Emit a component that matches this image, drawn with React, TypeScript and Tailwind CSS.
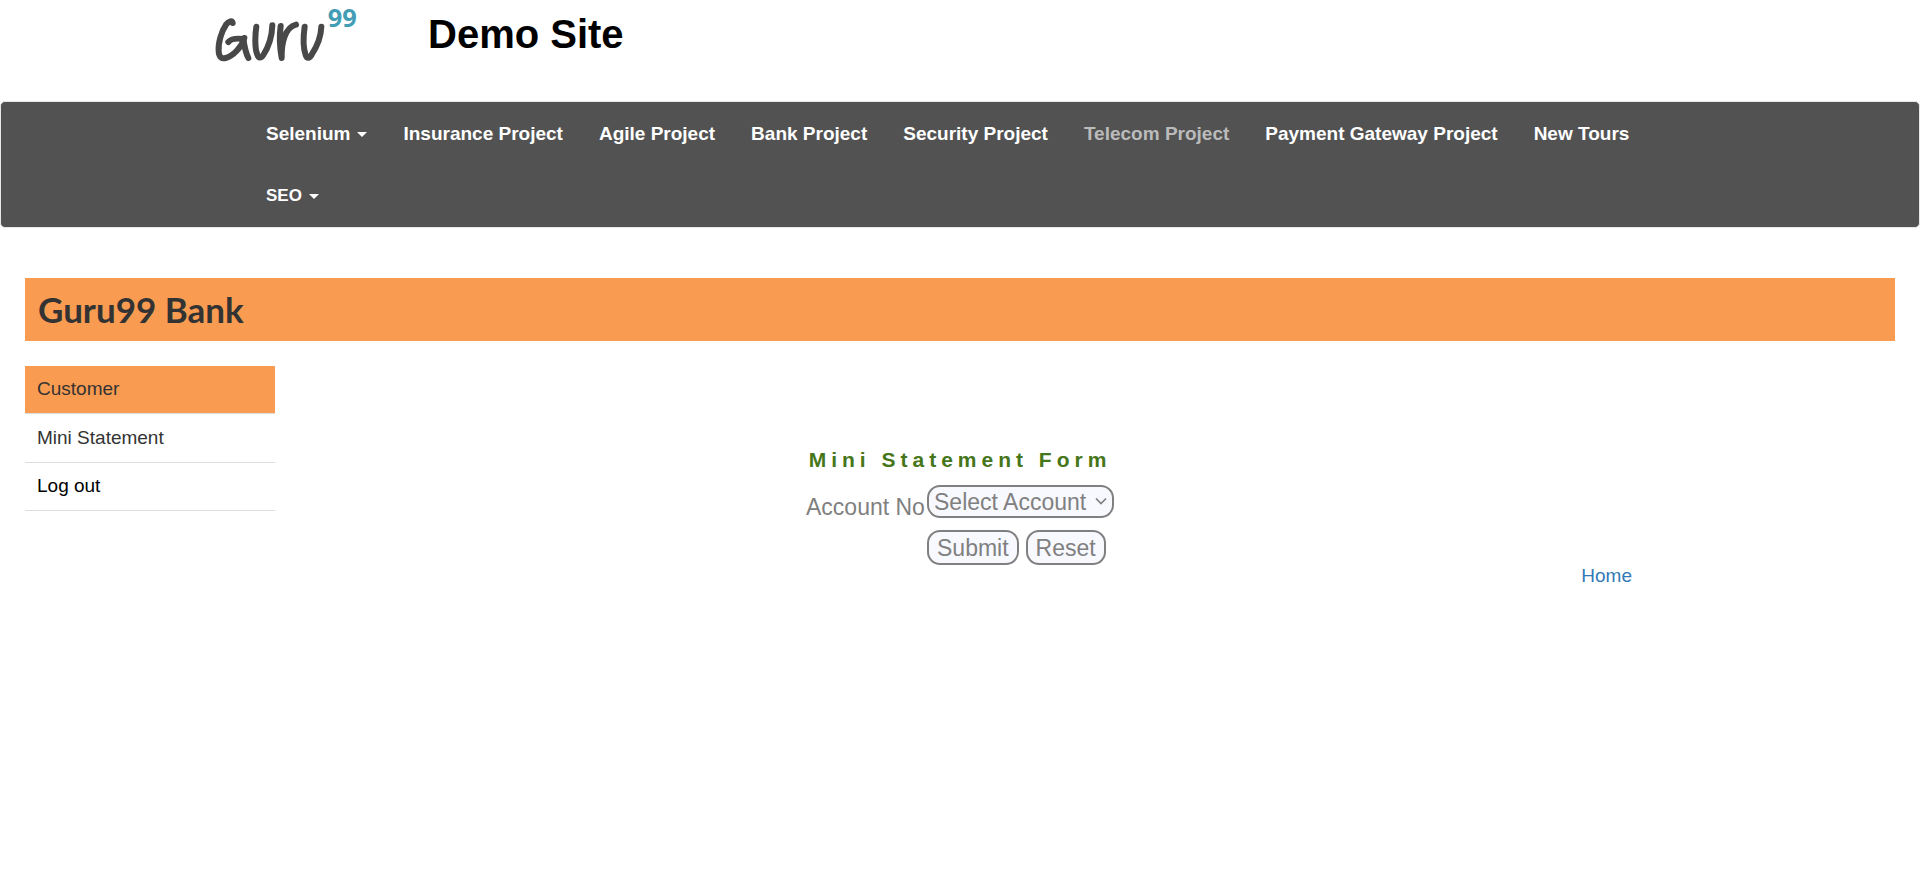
import React from "react";

type NavEntry = { label: string; menu?: boolean; visited?: boolean; small?: boolean };

const NAV: NavEntry[] = [
  { label: "Selenium", menu: true },
  { label: "Insurance Project" },
  { label: "Agile Project" },
  { label: "Bank Project" },
  { label: "Security Project" },
  { label: "Telecom Project", visited: true },
  { label: "Payment Gateway Project" },
  { label: "New Tours" },
  { label: "SEO", menu: true, small: true },
];

function Logo() {
  return (
    <svg
      viewBox="0 0 510 210"
      className="h-[70px] w-[170px]"
      role="img"
      aria-label="Guru99"
      fill="none"
      stroke="#484848"
      strokeWidth="18"
      strokeLinecap="round"
      strokeLinejoin="round"
    >
      <path d="M98 69C96 61 87 62 78 74C64 94 54 130 56 154C57 171 65 177 77 174C100 168 126 140 133 114" />
      <path d="M85 126C92 118 108 114 130 117C133 138 137 158 145 174" />
      <path d="M169 80C165 106 164 146 172 164C176 175 183 176 190 165C206 140 216 106 217 76" />
      <path d="M242 78C238 106 240 146 245 174C244 132 254 82 288 74" />
      <path d="M314 80C310 108 310 146 317 165C321 177 328 176 335 164C352 138 363 108 364 80" />
      <text
        x="383"
        y="80"
        fontSize="76"
        fontWeight="700"
        fill="#429db5"
        stroke="none"
        className="font-['Noto_Sans','Open_Sans',sans-serif]"
      >
        99
      </text>
    </svg>
  );
}

function Caret() {
  return (
    <span
      aria-hidden="true"
      className="ml-[7px] inline-block border-x-[5px] border-t-[5px] border-x-transparent border-t-current align-middle"
    />
  );
}

function SiteHeader() {
  return (
    <header className="mx-auto flex h-[101px] max-w-[1520px] items-start">
      <a href="#home">
        <Logo />
      </a>
      <h1 className="ml-[58px] pt-3 text-[40px] leading-[44px] font-bold text-black">Demo Site</h1>
    </header>
  );
}

function NavBar() {
  return (
    <nav className="rounded-[5px] border border-[#e7e7e7] bg-[#525252] pt-px">
      <ul className="mx-auto flex max-w-[1462px] flex-wrap px-[19px]">
        {NAV.map((item) => (
          <li key={item.label}>
            <a
              href="#nav"
              className={`block px-[18px] leading-[62px] font-bold whitespace-nowrap ${
                item.small ? "text-[17px]" : "text-[19px]"
              } ${item.visited ? "text-[#bbbbbb]" : "text-white"}`}
            >
              {item.label}
              {item.menu && <Caret />}
            </a>
          </li>
        ))}
      </ul>
    </nav>
  );
}

function SideMenu() {
  return (
    <ul className="text-[19px] leading-[24px] text-[#333333]">
      <li className="border-b border-[#dddddd] bg-[#f99b51] px-3 pt-[11px] pb-3">Customer</li>
      <li className="border-b border-[#dddddd]">
        <a href="#mini" className="block px-3 pt-3 pb-3">
          Mini Statement
        </a>
      </li>
      <li className="border-b border-[#dddddd]">
        <a href="#logout" className="block px-3 pt-[11px] pb-3 text-black">
          Log out
        </a>
      </li>
    </ul>
  );
}

const BUTTON =
  "h-[35px] rounded-[13px] border-2 border-[#808080] bg-[#f8f8ff] px-2 leading-[30px] text-[#808080]";

function StatementForm() {
  return (
    <form className="pt-20" onSubmit={(e) => e.preventDefault()}>
      <h2 className="text-center text-[21px] leading-[28px] font-bold tracking-[5px] text-[#46761a]">
        Mini Statement Form
      </h2>
      <div className="mx-auto mt-[11px] grid w-fit grid-cols-[121px_auto] text-[23px] text-[#808080]">
        <label htmlFor="account" className="pt-[10px] leading-[24px] whitespace-nowrap">
          Account No
        </label>
        <div className="relative">
          <select
            id="account"
            className="block h-[33px] w-[187px] appearance-none rounded-[13px] border-2 border-[#808080] bg-[#f8f8ff] pl-[5px] leading-[28px]"
          >
            <option>Select Account</option>
          </select>
          <svg
            aria-hidden="true"
            viewBox="0 0 12 8"
            className="pointer-events-none absolute top-3 right-[7px] h-2 w-3"
            fill="none"
            stroke="#808080"
            strokeWidth="1.7"
          >
            <path d="M1 1.5L6 6.5L11 1.5" />
          </svg>
        </div>
        <div className="col-start-2 mt-[11px] flex gap-[7px]">
          <button type="submit" className={BUTTON}>
            Submit
          </button>
          <button type="reset" className={BUTTON}>
            Reset
          </button>
        </div>
      </div>
    </form>
  );
}

export default function App() {
  return (
    <div className="bg-white font-['Liberation_Sans',Arial,sans-serif]">
      <SiteHeader />
      <NavBar />
      <main className="px-[25px] pt-[50px]">
        <h2 className="bg-[#f99b51] px-[13px] font-['Lato',sans-serif] text-[35px] leading-[63px] font-bold text-[#333333]">
          Guru99 Bank
        </h2>
        <div className="mt-[25px] grid grid-cols-[250px_1fr_250px]">
          <SideMenu />
          <StatementForm />
        </div>
      </main>
      <footer className="mx-auto max-w-[1462px] pr-[59px] text-right text-[19px] leading-[22px]">
        <a href="#home" className="text-[#337ab7]">
          Home
        </a>
      </footer>
    </div>
  );
}
